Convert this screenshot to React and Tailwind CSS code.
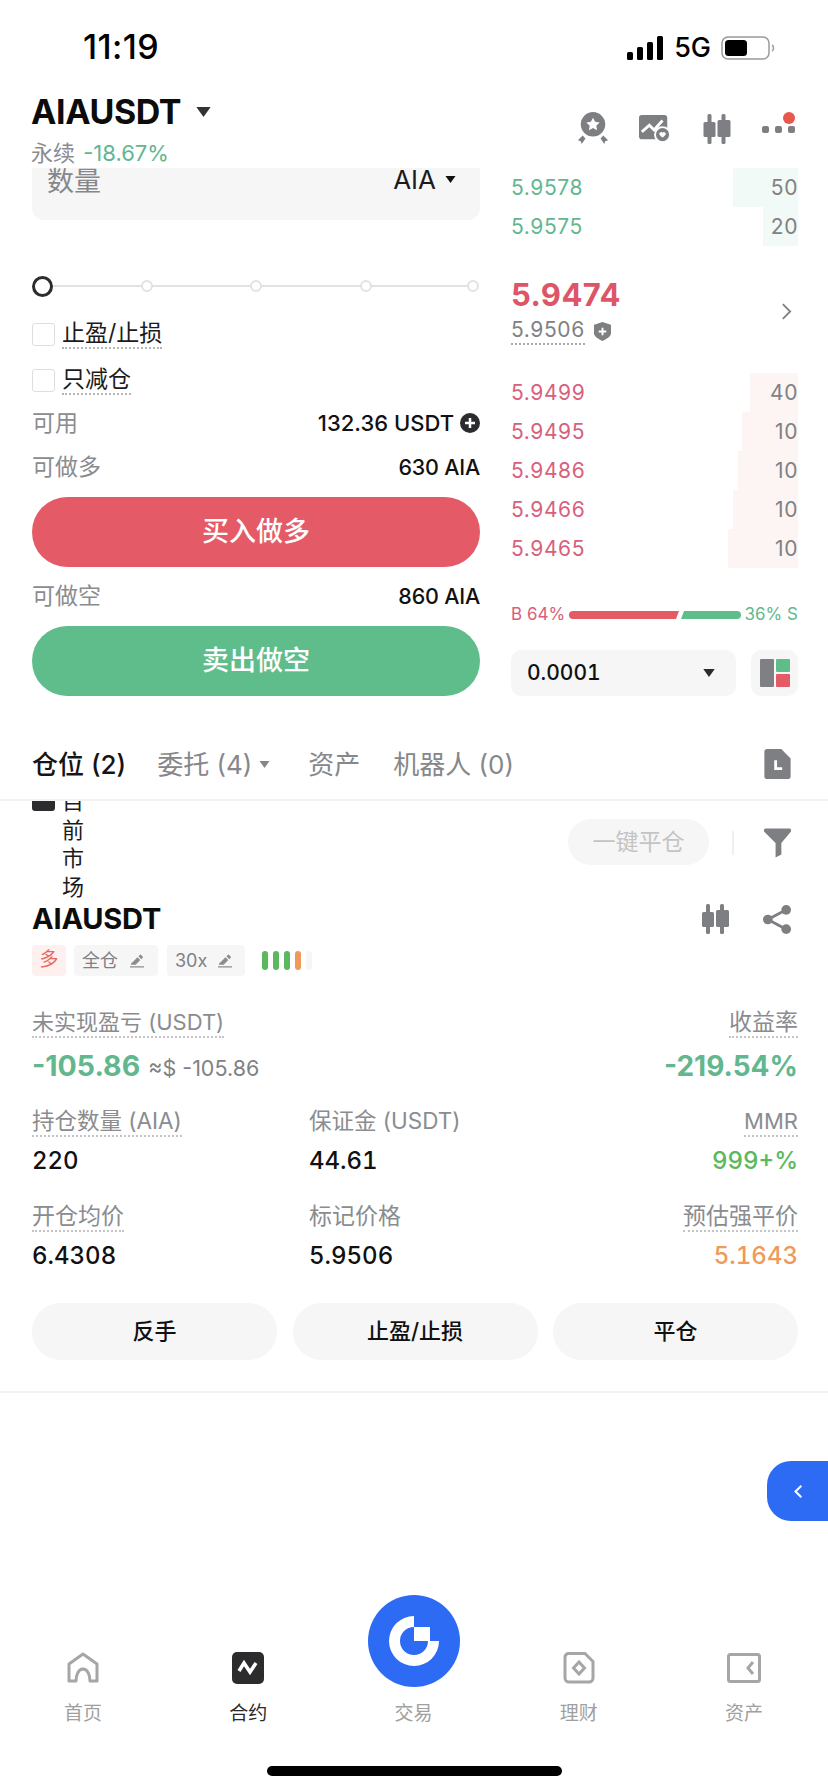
import React from 'react';

const asks = [
  { price: '5.9578', qty: '50', bar: 65 },
  { price: '5.9575', qty: '20', bar: 35 },
];
const bids = [
  { price: '5.9499', qty: '40', bar: 48 },
  { price: '5.9495', qty: '10', bar: 56 },
  { price: '5.9486', qty: '10', bar: 60 },
  { price: '5.9466', qty: '10', bar: 65 },
  { price: '5.9465', qty: '10', bar: 70 },
];

const Caret = ({ className = '' }) => (
  <svg viewBox="0 0 10 7" className={className} fill="currentColor"><path d="M0 0h10L5 7z" /></svg>
);

const Candles = ({ className = '' }) => (
  <svg viewBox="0 0 30 30" className={className} fill="#7d7f83">
    <rect x="6" y="0" width="4" height="30" rx="1.5" />
    <rect x="2" y="8" width="12" height="15" rx="1.5" />
    <rect x="20" y="0" width="4" height="30" rx="1.5" />
    <rect x="16" y="6" width="13" height="17" rx="1.5" />
  </svg>
);

const Pencil = () => (
  <svg viewBox="0 0 16 14" className="w-[15px] h-[14px]" fill="#8a8c90">
    <path d="M1 10 8 3l3 3-5 5H1zM9 2l1.5-1.5a1 1 0 0 1 1.4 0l1.6 1.6a1 1 0 0 1 0 1.4L12 5zM0 12.5h15V14H0z" />
  </svg>
);

const Check = ({ label }) => (
  <div className="flex items-center gap-[7px]">
    <div className="w-[23px] h-[23px] rounded-[3px] border border-[#dedede]" />
    <span className="text-[23px] leading-[28px] text-[#1b1b1d] border-b-2 border-dotted border-[#b5b5b5]">{label}</span>
  </div>
);

const Stat = ({ label, value, valueClass = 'text-[#111]', labelClass = 'text-[23px]', align = 'items-start', dotted = true }) => (
  <div className={`flex flex-col ${align} gap-[9px]`}>
    <span className={`${labelClass} leading-[28px] text-[#8a8c90] border-b-2 border-dotted ${dotted ? 'border-[#c4c4c4]' : 'border-transparent'}`}>{label}</span>
    <span className={`text-[24px] leading-[30px] font-medium tabular-nums ${valueClass}`}>{value}</span>
  </div>
);

const NavItem = ({ label, active, children }) => (
  <div className="flex flex-col items-center w-[80px]">
    <div className="h-[32px] flex items-center justify-center">{children}</div>
    <span className={`mt-[17px] text-[19px] leading-[26px] ${active ? 'text-[#2a2a2c]' : 'text-[#a0a0a0]'}`}>{label}</span>
  </div>
);

const BookRow = ({ row, color, barColor }) => (
  <div className="relative h-[39px] flex items-center justify-between">
    <div className={`absolute right-0 top-0 bottom-0 ${barColor}`} style={{ width: row.bar }} />
    <span className={`relative text-[21px] tracking-[0.6px] ${color}`}>{row.price}</span>
    <span className="relative text-[21px] tracking-[0.6px] text-[#808184]">{row.qty}</span>
  </div>
);

export default function App() {
  return (
    <div className="relative w-[828px] h-[1792px] overflow-hidden bg-white font-['Inter','Noto_Sans_CJK_SC',sans-serif]">
      {/* status bar */}
      <div className="h-[92px] pt-[28px] pl-[83px] pr-[53px] flex items-start justify-between">
        <span className="text-[34px] leading-[38px] font-medium tracking-[0.4px] text-black">11:19</span>
        <div className="flex items-center gap-[9px] h-[38px] pt-[1px]">
          <svg viewBox="0 0 38 24" className="w-[38px] h-[24px]" fill="#000">
            <rect x="0" y="16" width="6" height="8" rx="1.5" />
            <rect x="10" y="11" width="6" height="13" rx="1.5" />
            <rect x="20" y="6" width="6" height="18" rx="1.5" />
            <rect x="30" y="0" width="6" height="24" rx="1.5" />
          </svg>
          <span className="text-[27px] leading-[30px] font-medium text-black">5G</span>
          <svg viewBox="0 0 54 24" className="w-[54px] h-[24px] ml-[1px]">
            <rect x="1" y="1" width="47" height="22" rx="6" fill="none" stroke="#9a9a9a" strokeWidth="1.5" />
            <rect x="4" y="4" width="22" height="16" rx="3.5" fill="#000" />
            <path d="M51 9c2 1 2 5 0 6" fill="none" stroke="#9a9a9a" strokeWidth="1.5" />
          </svg>
        </div>
      </div>

      {/* pair header */}
      <div className="relative h-[76px] pl-[31px] pr-[33px] flex justify-between">
        <div>
          <div className="flex items-center gap-[15px] h-[40px]">
            <span className="text-[34px] leading-[40px] font-bold text-[#0c0c0c] tracking-[-0.4px]">AIAUSDT</span>
            <Caret className="w-[15px] h-[10px] text-[#333]" />
          </div>
          <div className="mt-[8px] text-[22px] leading-[26px] text-[#8a8c90]">
            永续 <span className="ml-[2px] text-[#62b78f]">-18.67%</span>
          </div>
        </div>
        <div className="flex items-center gap-[30px] mb-[2px]">
          <svg viewBox="0 0 34 36" className="w-[32px] h-[34px]" fill="#7d7f83">
            <circle cx="17" cy="13" r="13" />
            <path d="m17 6 2.2 4.4 4.8.7-3.500 3.400.8 4.800-4.300-2.300-4.300 2.300.8-4.800L10 11.100l4.800-.7z" fill="#fff" />
            <path d="M6 25 1 30l3 1 1 3 4-6zM28 25l5 5-3 1-1 3-4-6z" />
          </svg>
          <svg viewBox="0 0 34 30" className="w-[32px] h-[30px]">
            <rect x="0" y="0" width="30" height="26" rx="3" fill="#7d7f83" />
            <path d="m3 18 8-7 5 5 9-10" fill="none" stroke="#fff" strokeWidth="3" />
            <circle cx="25" cy="21" r="8" fill="#7d7f83" stroke="#fff" strokeWidth="2" />
            <path d="M21.500 20a2 2 0 0 1 3.500-1 2 2 0 0 1 3.500 1c0 1.500-2 3-3.500 4-1.500-1-3.500-2.500-3.500-4z" fill="#fff" />
          </svg>
          <Candles className="w-[31px] h-[30px]" />
          <div className="relative w-[33px] h-[30px] flex items-center justify-between">
            <span className="w-[7px] h-[7px] rounded-[2px] bg-[#7d7f83]" />
            <span className="w-[7px] h-[7px] rounded-[2px] bg-[#7d7f83]" />
            <span className="w-[7px] h-[7px] rounded-[2px] bg-[#7d7f83]" />
            <span className="absolute right-0 top-[-2px] w-[12px] h-[12px] rounded-full bg-[#e8574c]" />
          </div>
        </div>
      </div>

      {/* trade area */}
      <div className="h-[533px] pl-[32px] pr-[30px] flex justify-between">
        <div className="w-[448px]">
          <div className="h-[52px] bg-[#f6f6f6] rounded-b-[12px] pl-[15px] pr-[24px] flex items-start justify-between">
            <span className="text-[27px] leading-[26px] mt-[1px] text-[#85878b]">数量</span>
            <div className="flex items-center gap-[9px] mt-[-2px] h-[26px]">
              <span className="text-[26px] text-[#1b1b1d]">AIA</span>
              <Caret className="w-[11px] h-[7px] text-[#111]" />
            </div>
          </div>

          <div className="relative mt-[56px] h-[20px] flex items-center">
            <div className="absolute left-[10px] right-[6px] h-[2px] bg-[#e2e2e2]" />
            <div className="relative w-[21px] h-[21px] rounded-full border-[3px] border-[#2c2c2e] bg-white" />
            <div className="relative ml-[88px] w-[12px] h-[12px] rounded-full border-2 border-[#e2e2e2] bg-white" />
            <div className="relative ml-[97px] w-[12px] h-[12px] rounded-full border-2 border-[#e2e2e2] bg-white" />
            <div className="relative ml-[98px] w-[12px] h-[12px] rounded-full border-2 border-[#e2e2e2] bg-white" />
            <div className="relative ml-[95px] w-[12px] h-[12px] rounded-full border-2 border-[#e2e2e2] bg-white" />
          </div>

          <div className="mt-[23px] flex flex-col gap-[16px]">
            <Check label="止盈/止损" />
            <Check label="只减仓" />
          </div>

          <div className="mt-[13px] h-[30px] flex items-center justify-between">
            <span className="text-[23px] text-[#8a8c90]">可用</span>
            <div className="flex items-center gap-[6px]">
              <span className="text-[22px] font-medium text-[#111]">132.36 USDT</span>
              <svg viewBox="0 0 20 20" className="w-[20px] h-[20px]">
                <circle cx="10" cy="10" r="10" fill="#2c2c2e" />
                <path d="M10 5v10M5 10h10" stroke="#fff" strokeWidth="2.500" />
              </svg>
            </div>
          </div>
          <div className="mt-[14px] h-[30px] flex items-center justify-between">
            <span className="text-[23px] text-[#8a8c90]">可做多</span>
            <span className="text-[21.500px] tracking-[-0.2px] font-medium text-[#111]">630 AIA</span>
          </div>
          <div className="mt-[15px] h-[70px] rounded-full bg-[#e45a67] flex items-center justify-center text-[27px] font-medium text-white">买入做多</div>
          <div className="mt-[14px] h-[30px] flex items-center justify-between">
            <span className="text-[23px] text-[#8a8c90]">可做空</span>
            <span className="text-[21.500px] tracking-[-0.2px] font-medium text-[#111]">860 AIA</span>
          </div>
          <div className="mt-[15px] h-[70px] rounded-full bg-[#5fbd8b] flex items-center justify-center text-[27px] font-medium text-white">卖出做空</div>
        </div>

        <div className="w-[287px]">
          <div>
            {asks.map((r) => (
              <BookRow key={r.price} row={r} color="text-[#62b78f]" barColor="bg-[#f1faf6]" />
            ))}
          </div>

          <div className="mt-[30px] h-[70px] flex items-center justify-between">
            <div>
              <div className="text-[31px] leading-[36px] font-bold tracking-[0.4px] text-[#dd5566]">5.9474</div>
              <div className="mt-[4px] flex items-center gap-[9px]">
                <span className="text-[21px] leading-[26px] tracking-[0.6px] text-[#808184] border-b-2 border-dotted border-[#a8a8a8]">5.9506</span>
                <svg viewBox="0 0 18 20" className="w-[17px] h-[19px]">
                  <path d="M9 0 17 2.500a1 1 0 0 1 1 1V12c0 3-5 6-9 8-4-2-9-5-9-8V3.500a1 1 0 0 1 1-1z" fill="#7d7f83" />
                  <path d="M9 6v8M5 10h8" stroke="#fff" strokeWidth="2" />
                </svg>
              </div>
            </div>
            <svg viewBox="0 0 12 18" className="w-[11px] h-[17px] mr-[6px]" fill="none" stroke="#808184" strokeWidth="2">
              <path d="m2 1 8 8-8 8" />
            </svg>
          </div>

          <div className="mt-[27px]">
            {bids.map((r) => (
              <BookRow key={r.price} row={r} color="text-[#d9607a]" barColor="bg-[#fdf4f4]" />
            ))}
          </div>

          <div className="mt-[34px] h-[26px] flex items-center justify-between text-[17px] whitespace-nowrap">
            <span className="text-[#d9607a]">B 64%</span>
            <svg viewBox="0 0 172 8" className="w-[172px] h-[8px] shrink-0">
              <path d="M4 0h106l-3 8H4a4 4 0 0 1 0-8z" fill="#e45a67" />
              <path d="M115 0h53a4 4 0 0 1 0 8h-56z" fill="#5fbd8b" />
            </svg>
            <span className="text-[#62b78f]">36% S</span>
          </div>

          <div className="mt-[22px] flex justify-between">
            <div className="w-[225px] h-[46px] rounded-[10px] bg-[#f6f6f6] pl-[16px] pr-[21px] flex items-center justify-between">
              <span className="text-[21px] font-medium tabular-nums text-[#111]">0.0001</span>
              <Caret className="w-[12px] h-[8px] text-[#2c2c2e]" />
            </div>
            <div className="w-[47px] h-[46px] rounded-[10px] bg-[#f6f6f6] flex items-center justify-center">
              <svg viewBox="0 0 30 30" className="w-[30px] h-[30px]">
                <rect x="0" y="1" width="14" height="28" rx="1" fill="#7f8084" />
                <rect x="16" y="1" width="14" height="13" rx="1" fill="#5fbd8b" />
                <rect x="16" y="16" width="14" height="13" rx="1" fill="#e45a67" />
              </svg>
            </div>
          </div>
        </div>
      </div>

      {/* tabs */}
      <div className="h-[100px] pt-[28px] pl-[32px] pr-[37px] border-b-2 border-[#f3f3f3] flex items-center justify-between">
        <div className="flex items-center text-[26px] text-[#85878b]">
          <span className="font-medium text-[#151515]">仓位 (2)</span>
          <span className="ml-[31px]">委托 (4)</span>
          <Caret className="w-[11px] h-[7px] ml-[7px] text-[#85878b]" />
          <span className="ml-[38px]">资产</span>
          <span className="ml-[33px]">机器人 (0)</span>
        </div>
        <svg viewBox="0 0 28 32" className="w-[27px] h-[30px]">
          <path d="M3 0h15l10 10v19a3 3 0 0 1-3 3H3a3 3 0 0 1-3-3V3a3 3 0 0 1 3-3z" fill="#7d7f83" />
          <path d="M12 12v9h7" fill="none" stroke="#fff" strokeWidth="3" />
        </svg>
      </div>

      {/* position */}
      <div className="pl-[32px] pr-[30px] overflow-hidden">
        <div className="flex justify-between h-[101px]">
          <div className="flex items-start gap-[7px] mt-[-11px]">
            <div className="w-[23px] h-[21px] rounded-[3px] bg-[#2c2c2e]" />
            <span className="w-[24px] text-[22px] leading-[28.500px] text-[#1b1b1d] mt-[-3px]">目前市场</span>
          </div>
          <div className="flex items-start pt-[18px] pr-[7px]">
            <div className="w-[141px] h-[46px] rounded-full bg-[#f6f6f6] flex items-center justify-center text-[23px] text-[#c4c4c4]">一键平仓</div>
            <div className="w-[2px] h-[24px] bg-[#f0f0f0] ml-[23px] mt-[12px]" />
            <svg viewBox="0 0 28 30" className="w-[27px] h-[30px] ml-[30px] mt-[9px]" fill="#7d7f83">
              <path d="M2 0h24a2 2 0 0 1 2 3L18 15v12l-6 3V15L0 3a2 2 0 0 1 2-3z" />
            </svg>
          </div>
        </div>

        <div className="flex items-center justify-between h-[34px] pr-[6px]">
          <span className="text-[29px] font-bold text-[#0c0c0c] tracking-[-0.2px]">AIAUSDT</span>
          <div className="flex items-center gap-[33px]">
            <Candles className="w-[30px] h-[30px]" />
            <svg viewBox="0 0 30 30" className="w-[29px] h-[29px]" fill="#7d7f83">
              <circle cx="24" cy="5" r="5" />
              <circle cx="5" cy="15" r="5" />
              <circle cx="24" cy="25" r="5" />
              <path d="M5 15 24 5M5 15l19 10" stroke="#7d7f83" strokeWidth="3" />
            </svg>
          </div>
        </div>

        <div className="mt-[9px] flex items-center">
          <span className="w-[34px] h-[31px] rounded-[4px] bg-[#fdf0ef] flex items-center justify-center text-[19px] text-[#e8665c]">多</span>
          <span className="ml-[8px] h-[31px] w-[84px] pl-[8px] rounded-[4px] bg-[#f6f6f6] flex items-center gap-[12px] text-[18px] text-[#808184]">全仓<Pencil /></span>
          <span className="ml-[9px] h-[31px] w-[78px] pl-[8px] rounded-[4px] bg-[#f6f6f6] flex items-center gap-[11px] text-[18px] text-[#808184]">30x<Pencil /></span>
          <div className="ml-[17px] flex gap-[5px]">
            <span className="w-[6px] h-[19px] rounded-full bg-[#5cb85c]" />
            <span className="w-[6px] h-[19px] rounded-full bg-[#5cb85c]" />
            <span className="w-[6px] h-[19px] rounded-full bg-[#5cb85c]" />
            <span className="w-[6px] h-[19px] rounded-full bg-[#ef9a5a]" />
            <span className="w-[6px] h-[19px] rounded-full bg-[#f6f6f6]" />
          </div>
        </div>

        <div className="mt-[32px] flex justify-between">
          <span className="text-[22px] leading-[28px] text-[#8a8c90] border-b-2 border-dotted border-[#c4c4c4]">未实现盈亏 (USDT)</span>
          <span className="text-[23px] leading-[28px] text-[#8a8c90] border-b-2 border-dotted border-[#c4c4c4]">收益率</span>
        </div>
        <div className="mt-[10px] flex justify-between items-center h-[36px]">
          <div className="flex items-baseline gap-[8px]">
            <span className="text-[28.500px] font-bold text-[#62b78f]">-105.86</span>
            <span className="text-[21.500px] text-[#808184]">≈$ -105.86</span>
          </div>
          <span className="text-[28px] font-bold text-[#62b78f]">-219.54%</span>
        </div>

        <div className="mt-[23px] grid grid-cols-[277px_1fr_1fr]">
          <Stat label="持仓数量 (AIA)" value="220" labelClass="text-[22.500px]" />
          <Stat label="保证金 (USDT)" value="44.61" labelClass="text-[22.500px]" dotted={false} />
          <Stat label="MMR" value="999+%" labelClass="text-[22px]" align="items-end" valueClass="text-[#5cb85c]" />
        </div>
        <div className="mt-[26px] grid grid-cols-[277px_1fr_1fr]">
          <Stat label="开仓均价" value="6.4308" />
          <Stat label="标记价格" value="5.9506" dotted={false} />
          <Stat label="预估强平价" value="5.1643" align="items-end" valueClass="text-[#ef9a5a]" />
        </div>

        <div className="mt-[32px] flex justify-between">
          {['反手', '止盈/止损', '平仓'].map((t) => (
            <div key={t} className="w-[245px] h-[57px] rounded-full bg-[#f6f6f6] flex items-center justify-center text-[22px] font-medium text-[#111]">{t}</div>
          ))}
        </div>
      </div>
      <div className="mt-[31px] h-[2px] bg-[#f3f3f3]" />

      {/* floating side tab */}
      <div className="absolute right-0 top-[1461px] w-[61px] h-[60px] rounded-l-[24px] bg-[#2d6bf5] flex items-center justify-center">
        <svg viewBox="0 0 12 18" className="w-[10px] h-[15px]" fill="none" stroke="#fff" strokeWidth="2.500">
          <path d="M10 2 3 9l7 7" />
        </svg>
      </div>

      {/* bottom nav */}
      <div className="absolute left-0 right-0 top-[1652px] pl-[43px] pr-[44px] flex justify-between">
        <NavItem label="首页">
          <svg viewBox="0 0 32 32" className="w-[32px] h-[32px]" fill="none" stroke="#a6a6a6" strokeWidth="3">
            <path d="M2 29V12L16 2l14 10v17h-7c0-5-2-12-7-12S9 24 9 29z" strokeLinejoin="round" />
          </svg>
        </NavItem>
        <NavItem label="合约" active>
          <svg viewBox="0 0 32 32" className="w-[32px] h-[32px]">
            <rect width="32" height="32" rx="5" fill="#2c2c2e" />
            <path d="m7 19 5-8 6 9 6-9" fill="none" stroke="#fff" strokeWidth="3.500" />
          </svg>
        </NavItem>
        <NavItem label="交易" />
        <NavItem label="理财">
          <svg viewBox="0 0 32 32" className="w-[32px] h-[32px]" fill="none" stroke="#a6a6a6" strokeWidth="3">
            <path d="M5 1.500h17l8 8V26a4 4 0 0 1-4 4H6a4 4 0 0 1-4-4V5a4 4 0 0 1 3-3.500z" />
            <path d="m16 10 5.500 6-5.500 6-5.500-6z" />
          </svg>
        </NavItem>
        <NavItem label="资产">
          <svg viewBox="0 0 34 30" className="w-[34px] h-[30px]" fill="none" stroke="#a6a6a6" strokeWidth="3">
            <rect x="1.500" y="1.500" width="31" height="27" rx="2" />
            <path d="m26 9-5 6 5 6" />
          </svg>
        </NavItem>
      </div>

      {/* center trade button */}
      <div className="absolute left-[368px] top-[1595px] w-[92px] h-[92px] rounded-full bg-[#2d6bf5] flex items-center justify-center">
        <svg viewBox="0 0 50 50" className="w-[50px] h-[50px]">
          <path d="M25 0v11a14 14 0 1 0 14 14h11A25 25 0 1 1 25 0z" fill="#fff" />
          <rect x="25" y="11" width="16" height="14" fill="#fff" />
        </svg>
      </div>

      {/* home indicator */}
      <div className="absolute left-[267px] top-[1766px] w-[295px] h-[10px] rounded-full bg-black" />
    </div>
  );
}
